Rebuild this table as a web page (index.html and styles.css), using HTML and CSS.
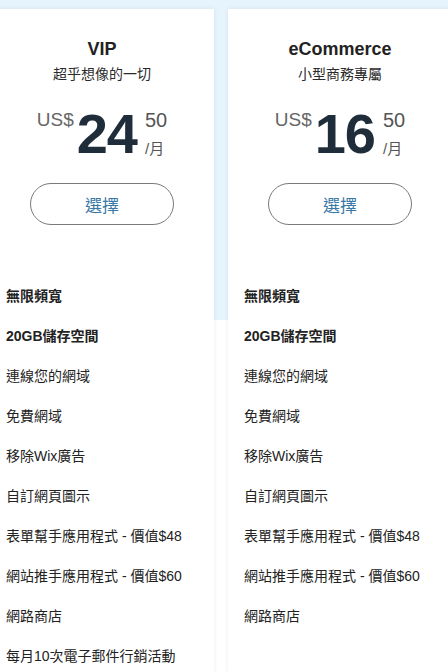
FILE: index.html
```html
<!DOCTYPE html>
<html lang="zh-Hant">
<head>
<meta charset="utf-8">
<link rel="stylesheet" href="styles.css">
</head>
<body>
<div class="plans">
  <section class="card">
    <h2 class="title">VIP</h2>
    <p class="sub">超乎想像的一切</p>
    <div class="price">
      <span class="cur">US$</span>
      <span class="big">24</span>
      <span class="tail"><span class="cents">50</span><span class="per">/月</span></span>
    </div>
    <button class="btn">選擇</button>
    <ul class="features">
      <li class="b">無限頻寬</li>
      <li class="b">20GB儲存空間</li>
      <li>連線您的網域</li>
      <li>免費網域</li>
      <li>移除Wix廣告</li>
      <li>自訂網頁圖示</li>
      <li>表單幫手應用程式 - 價值$48</li>
      <li>網站推手應用程式 - 價值$60</li>
      <li>網路商店</li>
      <li>每月10次電子郵件行銷活動</li>
    </ul>
  </section>
  <section class="card">
    <h2 class="title">eCommerce</h2>
    <p class="sub">小型商務專屬</p>
    <div class="price">
      <span class="cur">US$</span>
      <span class="big">16</span>
      <span class="tail"><span class="cents">50</span><span class="per">/月</span></span>
    </div>
    <button class="btn">選擇</button>
    <ul class="features">
      <li class="b">無限頻寬</li>
      <li class="b">20GB儲存空間</li>
      <li>連線您的網域</li>
      <li>免費網域</li>
      <li>移除Wix廣告</li>
      <li>自訂網頁圖示</li>
      <li>表單幫手應用程式 - 價值$48</li>
      <li>網站推手應用程式 - 價值$60</li>
      <li>網路商店</li>
    </ul>
  </section>
</div>
</body>
</html>
```
FILE: styles.css
```css
html, body {
  margin: 0;
  padding: 0;
}
body {
  width: 448px;
  height: 672px;
  overflow: hidden;
  background: linear-gradient(#e6f4fd 0, #e6f4fd 320px, #ffffff 320px);
  font-family: "Liberation Sans", Arial, "Noto Sans CJK TC", sans-serif;
  color: #222;
}
.plans {
  display: flex;
  gap: 14px;
  margin-left: -10px;
  padding-top: 9px;
  height: 663px;
  overflow: hidden;
}
.card {
  flex: 0 0 224px;
  width: 224px;
  height: 663px;
  background: #fff;
  box-shadow: 0 0 4px rgba(120, 110, 100, 0.14);
  padding-top: 29px;
  box-sizing: border-box;
  display: flex;
  flex-direction: column;
  align-items: center;
  overflow: hidden;
}
.card > * {
  flex-shrink: 0;
}
.title {
  margin: 0;
  font-size: 18px;
  line-height: 22px;
  font-weight: bold;
  color: #222;
}
.sub {
  margin: 5px 0 0;
  font-size: 14px;
  line-height: 18px;
  color: #2a2a2a;
  font-family: "Liberation Sans", "Noto Sans CJK TC", sans-serif;
}
.price {
  display: flex;
  align-items: flex-start;
  margin-top: 23px;
  color: #1f2d3a;
}
.cur {
  font-size: 19px;
  line-height: 20px;
  margin-top: 4px;
  margin-right: 3px;
  color: #666;
}
.big {
  font-size: 56px;
  line-height: 56px;
  font-weight: bold;
  color: #1f2d3a;
  letter-spacing: -1px;
}
.tail {
  display: flex;
  flex-direction: column;
  margin-left: 8px;
  color: #555;
}
.cents {
  font-size: 20px;
  line-height: 20px;
  margin-top: 4px;
}
.per {
  font-size: 15px;
  line-height: 18px;
  margin-top: 10px;
  font-family: "Liberation Sans", "Noto Sans CJK TC", sans-serif;
}
.btn {
  margin-top: 21px;
  width: 144px;
  height: 42px;
  border: 1px solid #7a7a7a;
  border-radius: 21px;
  background: #fff;
  font-family: "Liberation Sans", "Noto Sans CJK TC", sans-serif;
  font-size: 17px;
  color: #3a78a6;
  padding: 0;
}
.features {
  list-style: none;
  margin: 51px 0 0;
  padding: 0 0 0 16px;
  align-self: stretch;
}
.features li {
  font-size: 14px;
  line-height: 40px;
  height: 40px;
  color: #222;
  font-family: "Liberation Sans", "Noto Sans CJK TC", sans-serif;
}
.features li.b {
  font-weight: bold;
}
```
